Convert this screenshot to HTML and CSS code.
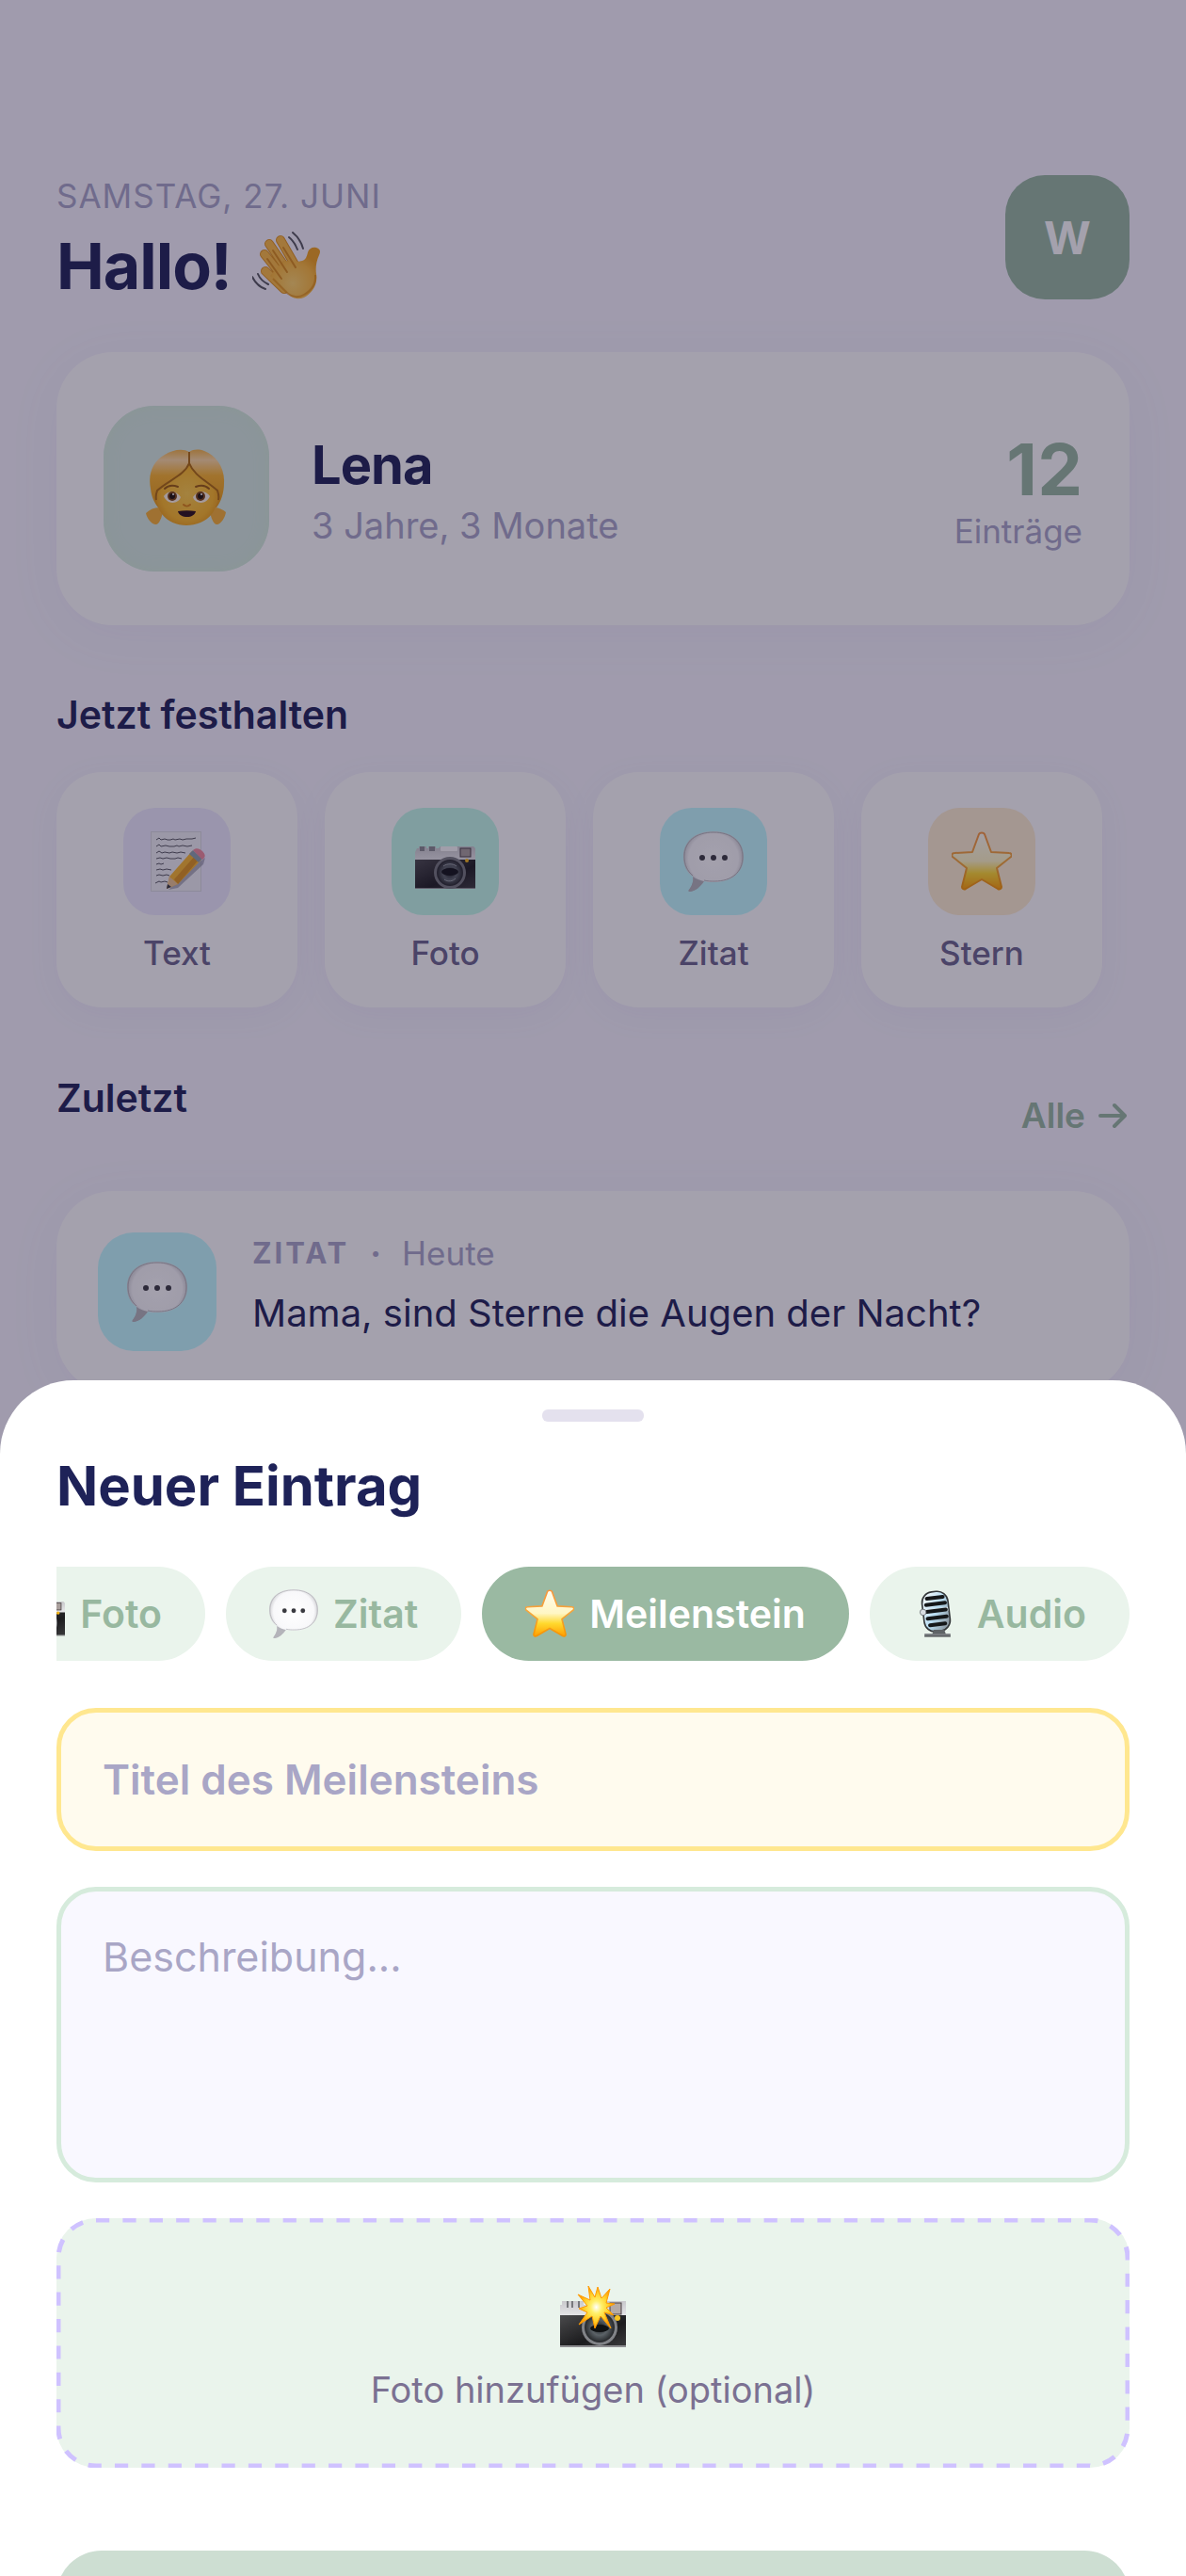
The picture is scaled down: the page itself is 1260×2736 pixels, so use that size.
FILE: index.html
```html
<!DOCTYPE html>
<html lang="de">
<head>
    <meta charset="UTF-8">
    <meta name="viewport" content="width=device-width, initial-scale=1.0">
    <title>Neuer Eintrag</title>
    <link rel="stylesheet" href="styles.css">
</head>
<body>
    <!-- Shared icons -->
    <svg class="sprite" aria-hidden="true">
        <defs>
            <linearGradient id="g-star" x1="0" y1="0" x2="0" y2="1">
                <stop offset="0" stop-color="#fffdf0"/>
                <stop offset=".5" stop-color="#fff6c4"/>
                <stop offset=".72" stop-color="#ffd92e"/>
                <stop offset="1" stop-color="#ff9d00"/>
            </linearGradient>
            <linearGradient id="g-star-line" x1="0" y1="0" x2="0" y2="1">
                <stop offset="0" stop-color="#f9973c"/>
                <stop offset=".5" stop-color="#f5a63a"/>
                <stop offset="1" stop-color="#f79400"/>
            </linearGradient>
            <radialGradient id="g-bubble" cx=".5" cy=".45" r=".55">
                <stop offset="0" stop-color="#ffffff"/>
                <stop offset=".75" stop-color="#f8f8fa"/>
                <stop offset="1" stop-color="#bdbdc2"/>
            </radialGradient>
            <linearGradient id="g-silver" x1="0" y1="0" x2="0" y2="1">
                <stop offset="0" stop-color="#c9c9cc"/>
                <stop offset="1" stop-color="#ededef"/>
            </linearGradient>
            <linearGradient id="g-body" x1="0" y1="0" x2="1" y2="1">
                <stop offset="0" stop-color="#4a4a4c"/>
                <stop offset=".6" stop-color="#1c1c1e"/>
                <stop offset="1" stop-color="#3a3a3c"/>
            </linearGradient>
            <radialGradient id="g-lens" cx=".5" cy=".5" r=".5">
                <stop offset="0" stop-color="#15181b"/>
                <stop offset=".55" stop-color="#5c6368"/>
                <stop offset="1" stop-color="#2c2f32"/>
            </radialGradient>
            <radialGradient id="g-palm" cx=".45" cy=".7" r=".6">
                <stop offset="0" stop-color="#ffd36a"/>
                <stop offset=".7" stop-color="#fdb93a"/>
                <stop offset="1" stop-color="#f0a01c"/>
            </radialGradient>
            <linearGradient id="g-hair" x1="0" y1="0" x2="0" y2="1">
                <stop offset="0" stop-color="#f5b545"/>
                <stop offset=".18" stop-color="#ffd9a0"/>
                <stop offset=".45" stop-color="#fbb32a"/>
                <stop offset="1" stop-color="#e89a12"/>
            </linearGradient>
            <radialGradient id="g-face" cx=".5" cy=".5" r=".6">
                <stop offset="0" stop-color="#ffcc48"/>
                <stop offset=".7" stop-color="#fdb825"/>
                <stop offset="1" stop-color="#e6930f"/>
            </radialGradient>
            <linearGradient id="g-mic" x1="0" y1="0" x2="1" y2="1">
                <stop offset="0" stop-color="#ffffff"/>
                <stop offset=".5" stop-color="#b9ddf2"/>
                <stop offset="1" stop-color="#80868c"/>
            </linearGradient>
            <radialGradient id="g-flash" cx=".5" cy=".5" r=".5">
                <stop offset="0" stop-color="#ffffff"/>
                <stop offset=".3" stop-color="#fff06a"/>
                <stop offset=".65" stop-color="#ffd02a"/>
                <stop offset="1" stop-color="#ff9a00"/>
            </radialGradient>
        </defs>

        <symbol id="i-wave" viewBox="0 0 72 72">
            <g fill="none" stroke-linecap="round">
                <g stroke="#e0911a" stroke-width="10">
                    <path d="M30 9l15 26M18 13l20 29M13 24l20 25M14 42l20 19"/>
                </g>
                <g stroke="#fdbb42" stroke-width="8">
                    <path d="M30 9l15 26M18 13l20 29M13 24l20 25M14 42l20 19"/>
                </g>
            </g>
            <path d="M33 31l15 1 5-1c4-1 5-5 6-9 1-4 5-6 9-5 4 1 5 4 3 8-3 7-4 13-3 20 2 12-5 21-13 25-5 2-10 2-15-2L19 47z" fill="url(#g-palm)"/>
            <path d="M33 17l13 21M22 20l15 23M16 29l15 21" fill="none" stroke="#d98a18" stroke-width="2" stroke-linecap="round"/>
            <path d="M22 50l16 16c5 4 12 4 17 1 7-4 13-11 12-21" fill="none" stroke="#d98209" stroke-width="2" opacity=".6"/>
            <path d="M43 1c5 4 9 10 11 17M39 6c4 3 7 8 9 13M0 48c3 6 8 11 14 13M6 45c2 5 7 9 11 11" fill="none" stroke="#55565e" stroke-width="2" stroke-linecap="round"/>
        </symbol>

        <symbol id="i-girl" viewBox="0 0 86 84">
            <path d="M14 62c-5 0-10 2-14 6 1 5 5 11 10 12 4 1 7-8 8-13zM72 62c5 0 10 2 13 5-1 6-5 12-9 13-4 1-7-8-8-13z" fill="#f7b032"/>
            <path d="M46 3C39-1 28 1 20 6 7 13 2 27 5 42c1 9 4 15 8 20h62c5-6 8-16 8-26C84 20 75 7 62 2c-6-2-11-2-16 1z" fill="url(#g-hair)"/>
            <path d="M46 14C41 28 24 33 12 44c-2 9 0 18 5 25 6 8 16 12 26 12s21-4 27-12c5-7 8-16 6-25C65 34 51 28 46 14z" fill="url(#g-face)"/>
            <path d="M46 3v12C41 28 24 33 12 44c-1 3-2 6-1 10M46 15c5 13 19 19 30 29 1 3 2 6 1 10" fill="none" stroke="#ad690c" stroke-width="2"/>
            <path d="M20 42c4-4 9-4 14-2M53 40c5-2 10-2 14 2" fill="none" stroke="#9a5a0c" stroke-width="2" stroke-linecap="round"/>
            <path d="M19 50c4-6 13-7 18 1-2 7-14 9-18-1zM50 51c5-8 14-7 18-1-4 10-16 8-18 1z" fill="#fff4e4"/>
            <circle cx="28" cy="50" r="5" fill="#7a4310"/>
            <circle cx="58" cy="50" r="5" fill="#7a4310"/>
            <circle cx="28" cy="50" r="3" fill="#1c0f08"/>
            <circle cx="58" cy="50" r="3" fill="#1c0f08"/>
            <circle cx="29" cy="48" r="1" fill="#fff"/>
            <circle cx="59" cy="48" r="1" fill="#fff"/>
            <path d="M40 59c2 2 5 2 7 0" fill="none" stroke="#dc8110" stroke-width="2" stroke-linecap="round"/>
            <path d="M34 66c6-1 13-1 19 0-1 4-5 6-9 6-5 0-9-2-10-6z" fill="#2a0f16"/>
        </symbol>

        <symbol id="i-memo" viewBox="0 0 64 64">
            <rect x="4" y="0" width="54" height="64" fill="#d9d9e0"/>
            <rect x="5" y="1" width="52" height="62" fill="#f1f1f5"/>
            <g fill="none" stroke="#55555f" stroke-width="1">
                <path d="M10 9l3-2 2 2 4-1 3 1h3l3-1 2 1 5-1 3 1 4-1 6 0 4-1"/>
                <path d="M10 16l3-2 2 2 5-1 4 1h5l3-1 2 1 4-1 5 1 5-1"/>
                <path d="M10 23l3-2 3 2 3-1 5 1 3-1 5 1 4-1 5 1"/>
                <path d="M10 29l4-1 3 1 4-1 4 1h5l3-1 4 1"/>
                <path d="M10 35l3-1 2 1 3-1"/>
                <path d="M10 41l4-1 3 1 4-1 5 1"/>
                <path d="M10 47l3-1 4 1 4-1 3 1"/>
                <path d="M9 55l4-2 2 1 4-1 3 1"/>
            </g>
            <path d="M23 62l28-26 11-8-2 7-27 25z" fill="#6f6f86" opacity=".5"/>
            <path d="M21 61l3-13 24-27 10 9-25 26z" fill="#fbb62c"/>
            <path d="M29 51l23-26 4 4-23 27z" fill="#df931c"/>
            <path d="M24 48l9 8-12 5z" fill="#ecc391"/>
            <path d="M22 56l4 3-5 2z" fill="#33363e"/>
            <path d="M45 24l4-4 10 9-4 4z" fill="#8ea0ae"/>
            <path d="M49 20c3-3 7-2 10 1s4 6 0 9z" fill="#f08a9c"/>
        </symbol>

        <symbol id="i-camera" viewBox="0 0 64 64">
            <path d="M2 18h2v-2h8v2h2v-2h8v2h3l2-2h35l2 2v14H0V22z" fill="url(#g-silver)"/>
            <path d="M5 16h5v5H5zM15 16h6v5h-6z" fill="#88898e"/>
            <rect x="27" y="16" width="18" height="5" rx="1" fill="#fafafa"/>
            <rect x="48" y="18" width="11" height="9" fill="#a99f9c" stroke="#4a4144" stroke-width="1"/>
            <path d="M0 30h64v30H0z" fill="url(#g-body)"/>
            <path d="M0 60h64v1H0z" fill="#8d8d90"/>
            <circle cx="37" cy="44" r="17" fill="#77797d"/>
            <circle cx="37" cy="44" r="14" fill="#2b2d30"/>
            <circle cx="37" cy="44" r="13" fill="url(#g-lens)"/>
            <ellipse cx="37" cy="43" rx="9" ry="4" fill="#101214"/>
            <path d="M30 37c4-3 10-3 14 0M31 51c4 3 9 2 12-1" fill="none" stroke="#9fa6ab" stroke-width="1"/>
            <circle cx="55" cy="31" r="2" fill="#f7b718"/>
        </symbol>

        <symbol id="i-bubble" viewBox="0 0 64 64">
            <path d="M32 0c20 0 32 11 32 27S52 54 33 54c-4 0-8 0-11-1-4 6-9 10-15 11-2 0-2-1-1-2 3-4 5-9 4-14C3 43 0 36 0 27 0 11 12 0 32 0z" fill="url(#g-bubble)"/>
            <path d="M10 48c1 6-1 10-4 14-1 1 0 2 1 2 6-1 11-5 15-11-4-1-8-2-12-5z" fill="#b4b4ba"/>
            <path d="M32 1c19 0 31 10 31 26S52 53 33 53c-4 0-7 0-11-1M10 47C4 42 1 35 1 27 1 11 13 1 32 1" fill="none" stroke="#b4b4b9" stroke-width="1"/>
            <circle cx="20" cy="28" r="3" fill="#3a3a40"/>
            <circle cx="32" cy="28" r="3" fill="#3a3a40"/>
            <circle cx="44" cy="28" r="3" fill="#3a3a40"/>
        </symbol>

        <symbol id="i-star" viewBox="0 0 64 64">
            <path d="M29 3c1-2 5-2 6 0l7 19 19 1c3 0 3 3 2 4L48 39l5 20c0 2-2 3-4 2L32 51 15 61c-2 1-4 0-4-2l5-20L1 27c-1-1-1-4 2-4l19-1z" fill="url(#g-star)" stroke="url(#g-star-line)" stroke-width="2" stroke-linejoin="round"/>
        </symbol>

        <symbol id="i-mic" viewBox="0 0 64 64">
            <g transform="rotate(-7 30 28)">
                <rect x="12" y="2" width="36" height="54" rx="15" fill="#34373a"/>
                <rect x="14" y="4" width="32" height="50" rx="13" fill="url(#g-mic)"/>
                <path d="M14 25h32v5H14z" fill="#dfe6ea"/>
                <path d="M20 11h21M18 19h25M18 28h25M18 37h25M20 46h20" stroke="#151719" stroke-width="5" stroke-linecap="round"/>
                <circle cx="13" cy="28" r="4" fill="#d9dee2" stroke="#686c70" stroke-width="1"/>
            </g>
            <path d="M27 53h14l2 6H25z" fill="#5e6366"/>
            <path d="M15 58h34v4H15z" fill="#777b7e"/>
            <path d="M15 61h34v1H15z" fill="#3c3e40"/>
        </symbol>

        <symbol id="i-flash" viewBox="0 0 72 72">
            <path d="M1 24h2v-4h23v4h24v-4h21v20H1z" fill="url(#g-silver)"/>
            <path d="M8 20h2v7H8zM13 20h2v7h-2zM20 20h2v7h-2z" fill="#77787c"/>
            <rect x="54" y="22" width="12" height="12" fill="#b3aaa6" stroke="#4a4144" stroke-width="1"/>
            <path d="M1 35h70v33H1z" fill="url(#g-body)"/>
            <path d="M1 67h70v2H1z" fill="#8d8d90"/>
            <circle cx="43" cy="48" r="19" fill="#828488"/>
            <circle cx="43" cy="48" r="16" fill="#2b2d30"/>
            <circle cx="43" cy="48" r="15" fill="url(#g-lens)"/>
            <ellipse cx="43" cy="49" rx="10" ry="4" fill="#101214"/>
            <circle cx="62" cy="38" r="3" fill="#f7c21e"/>
            <path d="M31 4l7 12 3-11 4 12 9-10-4 15 9 1-9 4 8 8-10-3 7 17-11-13-6 13-3-13-14 9 9-13-9-4 9-3-10-12 13 6z" fill="url(#g-flash)" stroke="#ff9a00" stroke-width="1"/>
        </symbol>
    </svg>

    <main class="home">
        <header class="greeting">
            <div class="greeting-text">
                <p class="date">SAMSTAG, 27. JUNI</p>
                <h1 class="hello">Hallo! <svg class="icon-wave" aria-hidden="true"><use href="#i-wave"/></svg></h1>
            </div>
            <button class="profile" type="button">W</button>
        </header>

        <section class="card child">
            <div class="child-avatar"><svg class="icon-girl" aria-hidden="true"><use href="#i-girl"/></svg></div>
            <div class="child-info">
                <h2 class="child-name">Lena</h2>
                <p class="child-age">3 Jahre, 3 Monate</p>
            </div>
            <div class="child-count">
                <strong class="count">12</strong>
                <span class="count-label">Einträge</span>
            </div>
        </section>

        <h2 class="section-title">Jetzt festhalten</h2>
        <div class="tiles">
            <button class="tile" type="button">
                <span class="tile-icon lilac"><svg class="icon" aria-hidden="true"><use href="#i-memo"/></svg></span>
                Text
            </button>
            <button class="tile" type="button">
                <span class="tile-icon mint"><svg class="icon" aria-hidden="true"><use href="#i-camera"/></svg></span>
                Foto
            </button>
            <button class="tile" type="button">
                <span class="tile-icon sky"><svg class="icon" aria-hidden="true"><use href="#i-bubble"/></svg></span>
                Zitat
            </button>
            <button class="tile" type="button">
                <span class="tile-icon sun"><svg class="icon" aria-hidden="true"><use href="#i-star"/></svg></span>
                Stern
            </button>
        </div>

        <div class="section-row">
            <h2 class="section-title">Zuletzt</h2>
            <a class="all-link" href="#">Alle
                <svg class="icon-arrow" viewBox="0 0 30 30" aria-hidden="true"><path d="M2 15h25M17 4l11 11-11 11"/></svg>
            </a>
        </div>

        <article class="card entry">
            <span class="entry-icon sky"><svg class="icon" aria-hidden="true"><use href="#i-bubble"/></svg></span>
            <div class="entry-body">
                <p class="entry-meta"><b class="entry-type">ZITAT</b><span class="dot">·</span><span>Heute</span></p>
                <p class="entry-text">Mama, sind Sterne die Augen der Nacht?</p>
            </div>
        </article>
    </main>

    <!-- Bottom sheet -->
    <div class="overlay">
        <form class="sheet" role="dialog" aria-labelledby="sheet-title">
            <div class="handle"></div>
            <h2 class="sheet-title" id="sheet-title">Neuer Eintrag</h2>

            <div class="chips">
                <button class="chip" type="button"><svg class="icon-chip" aria-hidden="true"><use href="#i-camera"/></svg>Foto</button>
                <button class="chip" type="button"><svg class="icon-chip" aria-hidden="true"><use href="#i-bubble"/></svg>Zitat</button>
                <button class="chip active" type="button"><svg class="icon-chip" aria-hidden="true"><use href="#i-star"/></svg>Meilenstein</button>
                <button class="chip" type="button"><svg class="icon-chip" aria-hidden="true"><use href="#i-mic"/></svg>Audio</button>
            </div>

            <input class="field title-field" type="text" aria-label="Titel des Meilensteins" placeholder="Titel des Meilensteins">
            <textarea class="field text-field" aria-label="Beschreibung" placeholder="Beschreibung..."></textarea>

            <button class="photo-drop" type="button">
                <svg class="dashes" aria-hidden="true"><rect x="2" y="2" rx="40" pathLength="192"/></svg>
                <svg class="icon-flash" aria-hidden="true"><use href="#i-flash"/></svg>
                Foto hinzufügen (optional)
            </button>

            <button class="save" type="submit" aria-label="Speichern" disabled></button>
        </form>
    </div>
</body>
</html>
```
FILE: styles.css
```css
/* General */
* {
    box-sizing: border-box;
    margin: 0;
    padding: 0;
}

body {
    height: 100vh;
    overflow: hidden;
    font-family: Inter, "Liberation Sans", sans-serif;
    background-color: #f8f6ff;
    color: #1e2258;
}

button, input, textarea {
    font-family: inherit;
    border: none;
}

.sprite {
    position: absolute;
    width: 0;
    height: 0;
}

/* Home screen */
.home {
    padding: 186px 60px 0;
}

.greeting {
    display: flex;
    justify-content: space-between;
    align-items: center;
    margin-bottom: 56px;
}

.greeting-text {
    display: grid;
    gap: 16px;
}

.date {
    font-size: 35px;
    line-height: 44px;
    letter-spacing: 1px;
    color: #a9a6c9;
}

.hello {
    display: flex;
    align-items: center;
    gap: 22px;
    font-size: 68px;
    line-height: 72px;
    letter-spacing: -1px;
}

.icon-wave {
    width: 72px;
    height: 72px;
}

.profile {
    width: 132px;
    height: 132px;
    border-radius: 42px;
    background-color: #98b8a0;
    color: white;
    font-size: 48px;
    font-weight: 700;
}

.card {
    background-color: white;
    border-radius: 60px;
    box-shadow: 0 10px 60px rgba(120, 110, 180, 0.06);
}

/* Child card */
.child {
    display: flex;
    align-items: center;
    gap: 45px;
    padding: 57px 50px;
    margin-bottom: 71px;
}

.child-avatar {
    display: flex;
    justify-content: center;
    align-items: center;
    width: 176px;
    height: 176px;
    border-radius: 54px;
    background-color: #d7ebe1;
    box-shadow: inset 0 0 18px #d2efd8;
}

.icon-girl {
    width: 86px;
    height: 84px;
}

.child-info, .child-count {
    display: grid;
    gap: 8px;
    padding-top: 5px;
}

.child-info {
    flex: 1;
}

.child-name {
    font-size: 56px;
    line-height: 64px;
    letter-spacing: -1px;
}

.child-age {
    font-size: 38px;
    line-height: 48px;
    color: #a9a6c9;
}

.child-count {
    gap: 4px;
    text-align: right;
}

.count {
    font-size: 76px;
    line-height: 80px;
    color: #98b8a0;
}

.count-label {
    font-size: 35px;
    line-height: 44px;
    color: #a9a6c9;
}

.section-title {
    margin-bottom: 37px;
    font-size: 41px;
    line-height: 48px;
    font-weight: 600;
}

/* Quick actions */
.tiles {
    display: grid;
    grid-template-columns: repeat(4, 1fr);
    gap: 29px;
    padding-right: 29px;
    margin-bottom: 72px;
}

.tile {
    display: flex;
    flex-direction: column;
    align-items: center;
    gap: 18px;
    padding: 38px 0 36px;
    border-radius: 48px;
    background-color: white;
    box-shadow: 0 8px 36px rgba(120, 110, 180, 0.06);
    color: #6c658c;
    font-size: 35px;
    line-height: 44px;
    font-weight: 500;
}

.tile-icon, .entry-icon {
    display: flex;
    justify-content: center;
    align-items: center;
    flex: none;
}

.tile-icon {
    width: 114px;
    height: 114px;
    border-radius: 34px;
}

.icon {
    width: 64px;
    height: 64px;
}

.lilac { background-color: #efecff; }
.mint { background-color: #c4fbe9; }
.sky { background-color: #c1fbff; }
.sun { background-color: #ffeed0; }

/* Recent entries */
.section-row {
    display: flex;
    justify-content: space-between;
    align-items: center;
    margin-bottom: 38px;
}

.all-link {
    display: flex;
    align-items: center;
    gap: 14px;
    padding-right: 3px;
    color: #98b8a0;
    font-size: 37px;
    line-height: 44px;
    font-weight: 600;
    text-decoration: none;
}

.icon-arrow {
    width: 30px;
    height: 30px;
    fill: none;
    stroke: currentColor;
    stroke-width: 4;
    stroke-linecap: round;
    stroke-linejoin: round;
}

.entry {
    display: flex;
    gap: 38px;
    padding: 44px;
}

.entry-icon {
    width: 126px;
    height: 126px;
    border-radius: 38px;
}

.entry-body {
    display: grid;
    align-content: start;
    gap: 18px;
}

.entry-meta {
    display: flex;
    align-items: center;
    gap: 22px;
    font-size: 35px;
    line-height: 44px;
    color: #a9a6c9;
}

.entry-type {
    font-size: 31px;
    letter-spacing: 3px;
}

.dot {
    font-weight: 700;
}

.entry-text {
    font-size: 40px;
    line-height: 48px;
}

/* Sheet */
.overlay {
    position: fixed;
    inset: 0;
    display: flex;
    align-items: flex-end;
    background-color: rgba(28, 20, 50, 0.4);
}

.sheet {
    display: flex;
    flex-direction: column;
    flex: 1;
    min-width: 0;
    max-height: 1270px;
    overflow: hidden;
    padding: 31px 60px 60px;
    border-radius: 78px 78px 0 0;
    background-color: white;
}

.sheet > * {
    flex-shrink: 0;
}

.handle {
    align-self: center;
    width: 108px;
    height: 13px;
    margin-bottom: 32px;
    border-radius: 6px;
    background-color: #e4e1ee;
}

.sheet-title {
    margin-bottom: 50px;
    font-size: 58px;
    line-height: 72px;
}

/* Entry types, scrolled to the end */
.chips {
    display: flex;
    justify-content: flex-end;
    gap: 22px;
    margin-bottom: 50px;
    overflow: hidden;
}

.chip {
    display: flex;
    flex: none;
    align-items: center;
    gap: 16px;
    height: 100px;
    padding: 0 46px;
    border-radius: 50px;
    background-color: #eaf4ec;
    color: #98b8a0;
    font-size: 41px;
    font-weight: 600;
}

.chip.active {
    background-color: #9ab9a2;
    color: white;
}

.icon-chip {
    width: 52px;
    height: 52px;
}

.field {
    width: 100%;
    padding: 43px 44px;
    margin-bottom: 38px;
    border-radius: 42px;
    font-size: 43px;
    line-height: 52px;
    color: #1e2258;
}

.field::placeholder {
    color: #a9a6c6;
    opacity: 1;
}

.title-field {
    height: 152px;
    border: 5px solid #ffe78f;
    background-color: #fffbee;
    font-size: 44px;
    font-weight: 600;
}

.text-field {
    display: block;
    height: 314px;
    border: 5px solid #d6ebdc;
    background-color: #f9f8ff;
    resize: none;
}

.photo-drop {
    position: relative;
    display: flex;
    flex-direction: column;
    align-items: center;
    gap: 18px;
    padding: 68px 0 59px;
    margin-bottom: 88px;
    border-radius: 42px;
    background-color: #eaf4ec;
    color: #7b7192;
    font-size: 38px;
    line-height: 48px;
}

.dashes {
    position: absolute;
    inset: 0;
    width: 100%;
    height: 100%;
}

.dashes rect {
    width: calc(100% - 4px);
    height: calc(100% - 4px);
    fill: none;
    stroke: #cfc2ff;
    stroke-width: 5;
    stroke-dasharray: 1 1;
}

.icon-flash {
    width: 72px;
    height: 72px;
}

.save {
    height: 150px;
    border-radius: 48px;
    background-color: #cdded2;
}
```
